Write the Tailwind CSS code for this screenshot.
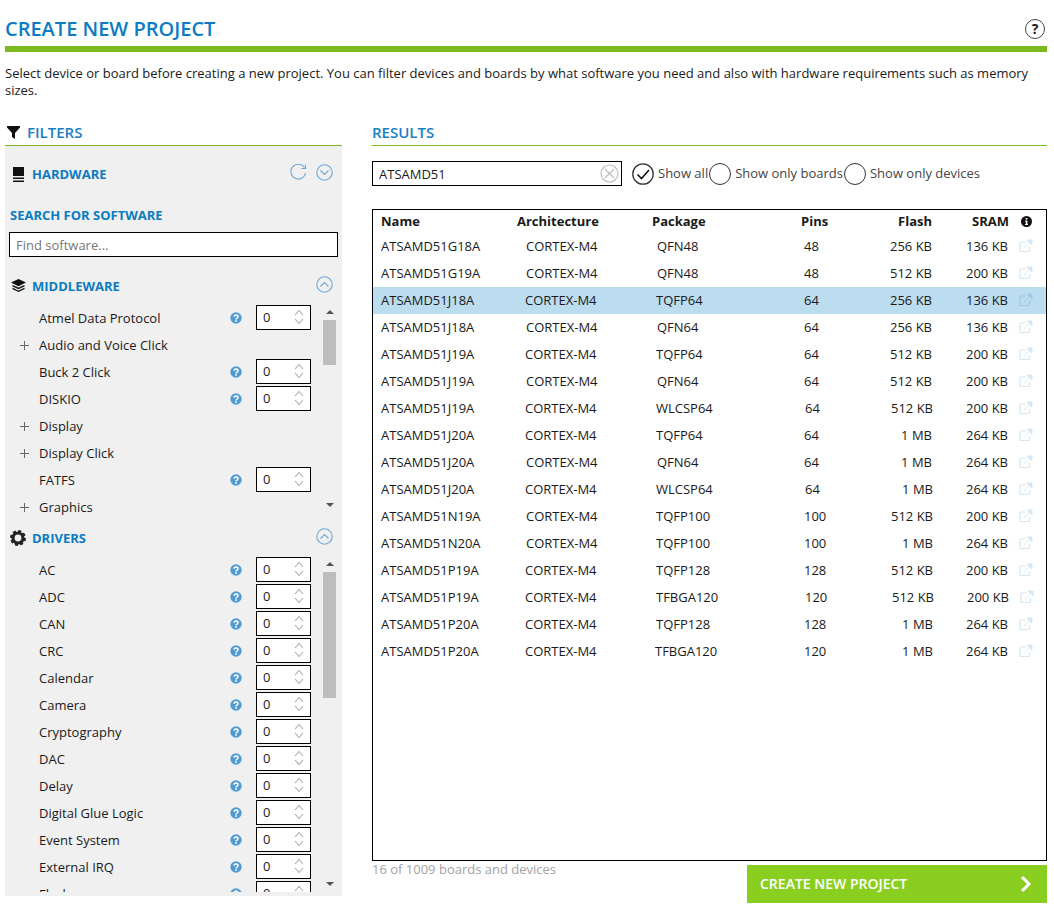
<!doctype html>
<html><head><meta charset="utf-8"><script src="https://cdn.jsdelivr.net/npm/@tailwindcss/browser@4"></script></head>
<body class="bg-white">
<svg class="hidden" width="0" height="0">
<symbol id="q" viewBox="0 0 12 12"><circle cx="6" cy="6" r="5.7" fill="#4f9bd3"/><path d="M4.2 4.7c0-2.2 3.8-2.2 3.8 0 0 1.5-2 1.4-2 2.8" fill="none" stroke="#fff" stroke-width="1.5"/><rect x="5.2" y="8.2" width="1.6" height="1.6" fill="#fff"/></symbol>
<symbol id="e" viewBox="0 0 14 14"><path d="M10.5 8v3.5a1 1 0 0 1-1 1H2a1 1 0 0 1-1-1V4a1 1 0 0 1 1-1h4.5" fill="none" stroke="currentColor" stroke-width="1.2"/><path d="M5 9l7-7M8 1h5v5z" fill="currentColor" stroke="currentColor" stroke-width=".9"/></symbol>
<symbol id="s" viewBox="0 0 10 22"><path d="M1 8l4-4.5 4 4.5M1 12l4 4.5 4-4.5" fill="none" stroke="#aaa" stroke-width="1.1"/></symbol>
<symbol id="up" viewBox="0 0 17 17"><circle cx="8.5" cy="8.5" r="7.7" fill="none" stroke="#6ea8d8" stroke-width="1.1"/><path d="M4.5 10.5l4-4 4 4" fill="none" stroke="#6ea8d8" stroke-width="1.1"/></symbol>
<symbol id="dn" viewBox="0 0 17 17"><circle cx="8.5" cy="8.5" r="7.7" fill="none" stroke="#6ea8d8" stroke-width="1.1"/><path d="M4.5 6.5l4 4 4-4" fill="none" stroke="#6ea8d8" stroke-width="1.1"/></symbol>
<symbol id="p" viewBox="0 0 9 9"><path d="M4.5 0v9M0 4.5h9" stroke="#666" stroke-width="1"/></symbol>
</svg>
<div class="h-[920px] w-[1054px] overflow-hidden pl-[5px] pr-[7px] font-['Open_Sans',sans-serif] text-[13px] leading-[17px] text-[#1a1a1a]">
  <header class="flex h-[46px] items-end justify-between">
    <h1 class="text-[20px] font-semibold leading-[34px] text-[#0b7cc2]">CREATE NEW PROJECT</h1>
    <div class="mb-[7px] mr-[2px] flex h-[20px] w-[20px] items-center justify-center rounded-full border-[1.5px] border-[#444] text-[14px] font-bold leading-none">?</div>
  </header>
  <div class="h-[6px] bg-[#7cb91e]"></div>
  <p class="mt-[13px] h-[34px]">Select device or board before creating a new project. You can filter devices and boards by what software you need and also with hardware requirements such as memory sizes.</p>
  <div class="mt-[21px] flex gap-[30px]">
    <section class="w-[337px]">
      <div class="box-content flex h-[24px] items-center gap-[7px] border-b border-[#7cb91e] pb-[1px] pl-[2px] text-[15px] font-semibold text-[#1a80c4]">
        <svg width="13" height="13" viewBox="0 0 13 13"><path d="M0 0h13v1.5L8 7v6L5 11V7L0 1.5z" fill="#111"/></svg>FILTERS
      </div>
      <div class="h-[750px] overflow-hidden bg-[#f0f0f0] pt-[15px]">
        <div class="flex h-[26px] items-center pl-[8px] pr-[9px] font-bold text-[#0b7cc2]">
          <svg class="mr-[8px]" width="11" height="15" viewBox="0 0 11 15"><path d="M0 0h11v9H0zM0 10.5h11V12H0zM0 13.5h11V15H0z" fill="#111"/></svg>HARDWARE
          <span class="flex-1"></span>
          <svg width="17" height="17" viewBox="0 0 17 17" class="mb-[3px] mr-[9px]"><path d="M14.5 3.5A7.4 7.4 0 1 0 15.6 9" fill="none" stroke="#6ea8d8" stroke-width="1.1"/><path d="M15.5 0.5v4h-4" fill="none" stroke="#6ea8d8" stroke-width="1.1"/></svg>
          <svg width="17" height="17" class="mb-[3px]"><use href="#dn"/></svg>
        </div>
        <div class="mt-[18px] pl-[5px] font-bold leading-[20px] text-[#0b7cc2]">SEARCH FOR SOFTWARE</div>
        <div class="ml-[4px] mt-[7px] flex h-[25px] w-[329px] items-center border border-black bg-white px-[6px] text-[#777]"><span class="pt-[1px]">Find software...</span></div>
        <div class="mt-[16px] flex h-[26px] items-center pl-[6px] pr-[9px] font-bold text-[#0b7cc2]">
          <svg class="mr-[6px]" width="15" height="14" viewBox="0 0 15 14"><path d="M7.5 0L15 3.6 7.5 7.2 0 3.6z" fill="#111"/><path d="M1.5 6.6L7.5 9.5l6-2.9M1.5 9.4l6 2.9 6-2.9" fill="none" stroke="#111" stroke-width="1.4"/></svg>MIDDLEWARE
          <span class="flex-1"></span>
          <svg width="17" height="17" class="mb-[3px]"><use href="#up"/></svg>
        </div>
        <div class="mt-[6px] flex h-[216px]">
          <div class="w-[318px] overflow-hidden">
            <div class="flex h-[27px] items-center pr-[12px]"><span class="w-[34px]"></span><span class="flex-1">Atmel Data Protocol</span><svg class="mb-[2px] mr-[14px]" width="12" height="12"><use href="#q"/></svg><span class="relative mb-[2px] block h-[25px] w-[55px] border border-black bg-white pl-[6px] leading-[23px]">0<svg class="absolute right-[6px] top-[1px]" width="10" height="22"><use href="#s"/></svg></span></div>
            <div class="flex h-[27px] items-center pr-[12px]"><span class="flex w-[34px] justify-start pl-[15px]"><svg width="9" height="9"><use href="#p"/></svg></span><span class="flex-1">Audio and Voice Click</span></div>
            <div class="flex h-[27px] items-center pr-[12px]"><span class="w-[34px]"></span><span class="flex-1">Buck 2 Click</span><svg class="mb-[2px] mr-[14px]" width="12" height="12"><use href="#q"/></svg><span class="relative mb-[2px] block h-[25px] w-[55px] border border-black bg-white pl-[6px] leading-[23px]">0<svg class="absolute right-[6px] top-[1px]" width="10" height="22"><use href="#s"/></svg></span></div>
            <div class="flex h-[27px] items-center pr-[12px]"><span class="w-[34px]"></span><span class="flex-1">DISKIO</span><svg class="mb-[2px] mr-[14px]" width="12" height="12"><use href="#q"/></svg><span class="relative mb-[2px] block h-[25px] w-[55px] border border-black bg-white pl-[6px] leading-[23px]">0<svg class="absolute right-[6px] top-[1px]" width="10" height="22"><use href="#s"/></svg></span></div>
            <div class="flex h-[27px] items-center pr-[12px]"><span class="flex w-[34px] justify-start pl-[15px]"><svg width="9" height="9"><use href="#p"/></svg></span><span class="flex-1">Display</span></div>
            <div class="flex h-[27px] items-center pr-[12px]"><span class="flex w-[34px] justify-start pl-[15px]"><svg width="9" height="9"><use href="#p"/></svg></span><span class="flex-1">Display Click</span></div>
            <div class="flex h-[27px] items-center pr-[12px]"><span class="w-[34px]"></span><span class="flex-1">FATFS</span><svg class="mb-[2px] mr-[14px]" width="12" height="12"><use href="#q"/></svg><span class="relative mb-[2px] block h-[25px] w-[55px] border border-black bg-white pl-[6px] leading-[23px]">0<svg class="absolute right-[6px] top-[1px]" width="10" height="22"><use href="#s"/></svg></span></div>
            <div class="flex h-[27px] items-center pr-[12px]"><span class="flex w-[34px] justify-start pl-[15px]"><svg width="9" height="9"><use href="#p"/></svg></span><span class="flex-1">Graphics</span></div>
          </div>
          <div class="relative w-[13px]">
            <div class="absolute left-[3px] top-[5px] h-0 w-0 border-x-[4px] border-b-[4px] border-x-transparent border-b-[#555]"></div>
            <div class="absolute left-0 top-[15px] h-[45px] w-[13px] bg-[#bdbdbd]"></div>
            <div class="absolute bottom-[14px] left-[3px] h-0 w-0 border-x-[4px] border-t-[4px] border-x-transparent border-t-[#555]"></div>
          </div>
        </div>
        <div class="mt-[4px] flex h-[26px] items-center pl-[5px] pr-[9px] font-bold text-[#0b7cc2]">
          <svg class="mr-[6px]" width="16" height="16" viewBox="0 0 16 16"><circle cx="8" cy="8" r="5" fill="none" stroke="#222" stroke-width="3.2"/><circle cx="8" cy="8" r="6.8" fill="none" stroke="#222" stroke-width="2.4" stroke-dasharray="3 2.34"/></svg>DRIVERS
          <span class="flex-1"></span>
          <svg width="17" height="17" class="mb-[3px]"><use href="#up"/></svg>
        </div>
        <div class="mt-[6px] flex h-[335px]">
          <div class="w-[318px] overflow-hidden">
            <div class="flex h-[27px] items-center pr-[12px]"><span class="w-[34px]"></span><span class="flex-1">AC</span><svg class="mb-[2px] mr-[14px]" width="12" height="12"><use href="#q"/></svg><span class="relative mb-[2px] block h-[25px] w-[55px] border border-black bg-white pl-[6px] leading-[23px]">0<svg class="absolute right-[6px] top-[1px]" width="10" height="22"><use href="#s"/></svg></span></div>
            <div class="flex h-[27px] items-center pr-[12px]"><span class="w-[34px]"></span><span class="flex-1">ADC</span><svg class="mb-[2px] mr-[14px]" width="12" height="12"><use href="#q"/></svg><span class="relative mb-[2px] block h-[25px] w-[55px] border border-black bg-white pl-[6px] leading-[23px]">0<svg class="absolute right-[6px] top-[1px]" width="10" height="22"><use href="#s"/></svg></span></div>
            <div class="flex h-[27px] items-center pr-[12px]"><span class="w-[34px]"></span><span class="flex-1">CAN</span><svg class="mb-[2px] mr-[14px]" width="12" height="12"><use href="#q"/></svg><span class="relative mb-[2px] block h-[25px] w-[55px] border border-black bg-white pl-[6px] leading-[23px]">0<svg class="absolute right-[6px] top-[1px]" width="10" height="22"><use href="#s"/></svg></span></div>
            <div class="flex h-[27px] items-center pr-[12px]"><span class="w-[34px]"></span><span class="flex-1">CRC</span><svg class="mb-[2px] mr-[14px]" width="12" height="12"><use href="#q"/></svg><span class="relative mb-[2px] block h-[25px] w-[55px] border border-black bg-white pl-[6px] leading-[23px]">0<svg class="absolute right-[6px] top-[1px]" width="10" height="22"><use href="#s"/></svg></span></div>
            <div class="flex h-[27px] items-center pr-[12px]"><span class="w-[34px]"></span><span class="flex-1">Calendar</span><svg class="mb-[2px] mr-[14px]" width="12" height="12"><use href="#q"/></svg><span class="relative mb-[2px] block h-[25px] w-[55px] border border-black bg-white pl-[6px] leading-[23px]">0<svg class="absolute right-[6px] top-[1px]" width="10" height="22"><use href="#s"/></svg></span></div>
            <div class="flex h-[27px] items-center pr-[12px]"><span class="w-[34px]"></span><span class="flex-1">Camera</span><svg class="mb-[2px] mr-[14px]" width="12" height="12"><use href="#q"/></svg><span class="relative mb-[2px] block h-[25px] w-[55px] border border-black bg-white pl-[6px] leading-[23px]">0<svg class="absolute right-[6px] top-[1px]" width="10" height="22"><use href="#s"/></svg></span></div>
            <div class="flex h-[27px] items-center pr-[12px]"><span class="w-[34px]"></span><span class="flex-1">Cryptography</span><svg class="mb-[2px] mr-[14px]" width="12" height="12"><use href="#q"/></svg><span class="relative mb-[2px] block h-[25px] w-[55px] border border-black bg-white pl-[6px] leading-[23px]">0<svg class="absolute right-[6px] top-[1px]" width="10" height="22"><use href="#s"/></svg></span></div>
            <div class="flex h-[27px] items-center pr-[12px]"><span class="w-[34px]"></span><span class="flex-1">DAC</span><svg class="mb-[2px] mr-[14px]" width="12" height="12"><use href="#q"/></svg><span class="relative mb-[2px] block h-[25px] w-[55px] border border-black bg-white pl-[6px] leading-[23px]">0<svg class="absolute right-[6px] top-[1px]" width="10" height="22"><use href="#s"/></svg></span></div>
            <div class="flex h-[27px] items-center pr-[12px]"><span class="w-[34px]"></span><span class="flex-1">Delay</span><svg class="mb-[2px] mr-[14px]" width="12" height="12"><use href="#q"/></svg><span class="relative mb-[2px] block h-[25px] w-[55px] border border-black bg-white pl-[6px] leading-[23px]">0<svg class="absolute right-[6px] top-[1px]" width="10" height="22"><use href="#s"/></svg></span></div>
            <div class="flex h-[27px] items-center pr-[12px]"><span class="w-[34px]"></span><span class="flex-1">Digital Glue Logic</span><svg class="mb-[2px] mr-[14px]" width="12" height="12"><use href="#q"/></svg><span class="relative mb-[2px] block h-[25px] w-[55px] border border-black bg-white pl-[6px] leading-[23px]">0<svg class="absolute right-[6px] top-[1px]" width="10" height="22"><use href="#s"/></svg></span></div>
            <div class="flex h-[27px] items-center pr-[12px]"><span class="w-[34px]"></span><span class="flex-1">Event System</span><svg class="mb-[2px] mr-[14px]" width="12" height="12"><use href="#q"/></svg><span class="relative mb-[2px] block h-[25px] w-[55px] border border-black bg-white pl-[6px] leading-[23px]">0<svg class="absolute right-[6px] top-[1px]" width="10" height="22"><use href="#s"/></svg></span></div>
            <div class="flex h-[27px] items-center pr-[12px]"><span class="w-[34px]"></span><span class="flex-1">External IRQ</span><svg class="mb-[2px] mr-[14px]" width="12" height="12"><use href="#q"/></svg><span class="relative mb-[2px] block h-[25px] w-[55px] border border-black bg-white pl-[6px] leading-[23px]">0<svg class="absolute right-[6px] top-[1px]" width="10" height="22"><use href="#s"/></svg></span></div>
            <div class="flex h-[27px] items-center pr-[12px]"><span class="w-[34px]"></span><span class="flex-1">Flash</span><svg class="mb-[2px] mr-[14px]" width="12" height="12"><use href="#q"/></svg><span class="relative mb-[2px] block h-[25px] w-[55px] border border-black bg-white pl-[6px] leading-[23px]">0<svg class="absolute right-[6px] top-[1px]" width="10" height="22"><use href="#s"/></svg></span></div>
          </div>
          <div class="relative w-[13px]">
            <div class="absolute left-[3px] top-[5px] h-0 w-0 border-x-[4px] border-b-[4px] border-x-transparent border-b-[#555]"></div>
            <div class="absolute left-0 top-[15px] h-[126px] w-[13px] bg-[#bdbdbd]"></div>
            <div class="absolute bottom-[6px] left-[3px] h-0 w-0 border-x-[4px] border-t-[4px] border-x-transparent border-t-[#555]"></div>
          </div>
        </div>
      </div>
    </section>
    <section class="flex-1">
      <div class="box-content flex h-[24px] items-center border-b border-[#7cb91e] pb-[1px] text-[15px] font-semibold text-[#1a80c4]">RESULTS</div>
      <div class="mt-[15px] flex h-[25px] items-center">
        <div class="flex h-[25px] w-[250px] items-center justify-between border border-black pl-[6px] pr-[2px]"><span class="pt-[1px]">ATSAMD51</span>
          <svg width="19" height="19" viewBox="0 0 19 19"><circle cx="9.5" cy="9.5" r="8.5" fill="none" stroke="#bbb" stroke-width="1.1"/><path d="M5 5l9 9M14 5l-9 9" stroke="#bbb" stroke-width="1.2"/></svg>
        </div>
        <svg class="ml-[10px] mr-[4px]" width="22" height="22" viewBox="0 0 22 22"><circle cx="11" cy="11" r="10.2" fill="#fff" stroke="#333" stroke-width="1.3"/><path d="M5.5 11.5l4 4 7.5-8.5" fill="none" stroke="#111" stroke-width="1.6"/></svg>
        <span class="text-[#444]">Show all</span>
        <span class="ml-[1px] mr-[4px] block h-[22px] w-[22px] rounded-full border-[1.3px] border-[#333]"></span>
        <span class="text-[#444]">Show only boards</span>
        <span class="ml-[1px] mr-[4px] block h-[22px] w-[22px] rounded-full border-[1.3px] border-[#333]"></span>
        <span class="text-[#444]">Show only devices</span>
      </div>
      <div class="mt-[23px] h-[652px] border border-black">
        <div class="flex h-[23px] items-center pl-[8px] font-bold"><span class="w-[136px]">Name</span><span class="w-[135px]">Architecture</span><span class="w-[149px]">Package</span><span class="w-[40px]">Pins</span><span class="w-[91px] text-right">Flash</span><span class="w-[77px] text-right">SRAM</span><svg class="ml-[12px]" width="11" height="11" viewBox="0 0 11 11"><circle cx="5.5" cy="5.5" r="5.5" fill="#111"/><path d="M4.6 2h1.8v1.6H4.6zM4 4.6h2.4V8H7v1H4V8h.8V5.6H4z" fill="#fff"/></svg></div>
        <div class="flex h-[27px] items-center pl-[8px]"><span class="w-[145px]">ATSAMD51G18A</span><span class="w-[130px]">CORTEX-M4</span><span class="w-[148px] pl-[1px]">QFN48</span><span class="w-[40px]">48</span><span class="w-[88px] text-right">256 KB</span><span class="w-[76px] text-right">136 KB</span><svg class="mb-[2px] ml-[11px] text-[#d2e6f4]" width="14" height="14"><use href="#e"/></svg></div>
        <div class="flex h-[27px] items-center pl-[8px]"><span class="w-[145px]">ATSAMD51G19A</span><span class="w-[130px]">CORTEX-M4</span><span class="w-[148px] pl-[1px]">QFN48</span><span class="w-[40px]">48</span><span class="w-[88px] text-right">512 KB</span><span class="w-[76px] text-right">200 KB</span><svg class="mb-[2px] ml-[11px] text-[#d2e6f4]" width="14" height="14"><use href="#e"/></svg></div>
        <div class="flex h-[27px] items-center bg-[#bcdcf0] pl-[8px]"><span class="w-[144px]">ATSAMD51J18A</span><span class="w-[131px]">CORTEX-M4</span><span class="w-[148px]">TQFP64</span><span class="w-[40px]">64</span><span class="w-[88px] text-right">256 KB</span><span class="w-[76px] text-right">136 KB</span><svg class="mb-[2px] ml-[11px] text-[#9cc8e6]" width="14" height="14"><use href="#e"/></svg></div>
        <div class="flex h-[27px] items-center pl-[8px]"><span class="w-[145px]">ATSAMD51J18A</span><span class="w-[130px]">CORTEX-M4</span><span class="w-[148px] pl-[1px]">QFN64</span><span class="w-[40px]">64</span><span class="w-[88px] text-right">256 KB</span><span class="w-[76px] text-right">136 KB</span><svg class="mb-[2px] ml-[11px] text-[#d2e6f4]" width="14" height="14"><use href="#e"/></svg></div>
        <div class="flex h-[27px] items-center pl-[8px]"><span class="w-[144px]">ATSAMD51J19A</span><span class="w-[131px]">CORTEX-M4</span><span class="w-[148px]">TQFP64</span><span class="w-[40px]">64</span><span class="w-[88px] text-right">512 KB</span><span class="w-[76px] text-right">200 KB</span><svg class="mb-[2px] ml-[11px] text-[#d2e6f4]" width="14" height="14"><use href="#e"/></svg></div>
        <div class="flex h-[27px] items-center pl-[8px]"><span class="w-[145px]">ATSAMD51J19A</span><span class="w-[130px]">CORTEX-M4</span><span class="w-[148px] pl-[1px]">QFN64</span><span class="w-[40px]">64</span><span class="w-[88px] text-right">512 KB</span><span class="w-[76px] text-right">200 KB</span><svg class="mb-[2px] ml-[11px] text-[#d2e6f4]" width="14" height="14"><use href="#e"/></svg></div>
        <div class="flex h-[27px] items-center pl-[8px]"><span class="w-[144px]">ATSAMD51J19A</span><span class="w-[131px]">CORTEX-M4</span><span class="w-[148px]">WLCSP64</span><span class="w-[40px] pl-[1px]">64</span><span class="w-[89px] text-right">512 KB</span><span class="w-[75px] text-right">200 KB</span><svg class="mb-[2px] ml-[11px] text-[#d2e6f4]" width="14" height="14"><use href="#e"/></svg></div>
        <div class="flex h-[27px] items-center pl-[8px]"><span class="w-[144px]">ATSAMD51J20A</span><span class="w-[131px]">CORTEX-M4</span><span class="w-[148px]">TQFP64</span><span class="w-[40px]">64</span><span class="w-[88px] text-right">1 MB</span><span class="w-[76px] text-right">264 KB</span><svg class="mb-[2px] ml-[11px] text-[#d2e6f4]" width="14" height="14"><use href="#e"/></svg></div>
        <div class="flex h-[27px] items-center pl-[8px]"><span class="w-[145px]">ATSAMD51J20A</span><span class="w-[130px]">CORTEX-M4</span><span class="w-[148px] pl-[1px]">QFN64</span><span class="w-[40px]">64</span><span class="w-[88px] text-right">1 MB</span><span class="w-[76px] text-right">264 KB</span><svg class="mb-[2px] ml-[11px] text-[#d2e6f4]" width="14" height="14"><use href="#e"/></svg></div>
        <div class="flex h-[27px] items-center pl-[8px]"><span class="w-[144px]">ATSAMD51J20A</span><span class="w-[131px]">CORTEX-M4</span><span class="w-[148px]">WLCSP64</span><span class="w-[40px] pl-[1px]">64</span><span class="w-[89px] text-right">1 MB</span><span class="w-[75px] text-right">264 KB</span><svg class="mb-[2px] ml-[11px] text-[#d2e6f4]" width="14" height="14"><use href="#e"/></svg></div>
        <div class="flex h-[27px] items-center pl-[8px]"><span class="w-[145px]">ATSAMD51N19A</span><span class="w-[130px]">CORTEX-M4</span><span class="w-[148px]">TQFP100</span><span class="w-[40px]">100</span><span class="w-[89px] text-right">512 KB</span><span class="w-[75px] text-right">200 KB</span><svg class="mb-[2px] ml-[11px] text-[#d2e6f4]" width="14" height="14"><use href="#e"/></svg></div>
        <div class="flex h-[27px] items-center pl-[8px]"><span class="w-[145px]">ATSAMD51N20A</span><span class="w-[130px]">CORTEX-M4</span><span class="w-[148px]">TQFP100</span><span class="w-[40px]">100</span><span class="w-[89px] text-right">1 MB</span><span class="w-[75px] text-right">264 KB</span><svg class="mb-[2px] ml-[11px] text-[#d2e6f4]" width="14" height="14"><use href="#e"/></svg></div>
        <div class="flex h-[27px] items-center pl-[8px]"><span class="w-[144px]">ATSAMD51P19A</span><span class="w-[131px]">CORTEX-M4</span><span class="w-[148px]">TQFP128</span><span class="w-[40px]">128</span><span class="w-[89px] text-right">512 KB</span><span class="w-[75px] text-right">200 KB</span><svg class="mb-[2px] ml-[11px] text-[#d2e6f4]" width="14" height="14"><use href="#e"/></svg></div>
        <div class="flex h-[27px] items-center pl-[8px]"><span class="w-[144px]">ATSAMD51P19A</span><span class="w-[131px]">CORTEX-M4</span><span class="w-[148px]">TFBGA120</span><span class="w-[40px] pl-[1px]">120</span><span class="w-[90px] text-right">512 KB</span><span class="w-[75px] text-right">200 KB</span><svg class="mb-[2px] ml-[11px] text-[#d2e6f4]" width="14" height="14"><use href="#e"/></svg></div>
        <div class="flex h-[27px] items-center pl-[8px]"><span class="w-[144px]">ATSAMD51P20A</span><span class="w-[131px]">CORTEX-M4</span><span class="w-[148px]">TQFP128</span><span class="w-[40px]">128</span><span class="w-[89px] text-right">1 MB</span><span class="w-[75px] text-right">264 KB</span><svg class="mb-[2px] ml-[11px] text-[#d2e6f4]" width="14" height="14"><use href="#e"/></svg></div>
        <div class="flex h-[27px] items-center pl-[8px]"><span class="w-[144px]">ATSAMD51P20A</span><span class="w-[130px]">CORTEX-M4</span><span class="w-[149px]">TFBGA120</span><span class="w-[40px]">120</span><span class="w-[89px] text-right">1 MB</span><span class="w-[75px] text-right">264 KB</span><svg class="mb-[2px] ml-[11px] text-[#d2e6f4]" width="14" height="14"><use href="#e"/></svg></div>
      </div>
      <div class="flex items-start justify-between">
        <span class="text-[#a3a3a3]">16 of 1009 boards and devices</span>
        <div class="mt-[4px] flex h-[38px] w-[300px] items-center justify-between bg-[#8acf1f] pl-[13px] pr-[15px] text-[14px] font-semibold text-white"><span class="pb-[2px]">CREATE NEW PROJECT</span>
          <svg width="12" height="16" viewBox="0 0 12 16"><path d="M2 1l7 7-7 7" fill="none" stroke="#fff" stroke-width="3"/></svg>
        </div>
      </div>
    </section>
  </div>
</div>
</body></html>
